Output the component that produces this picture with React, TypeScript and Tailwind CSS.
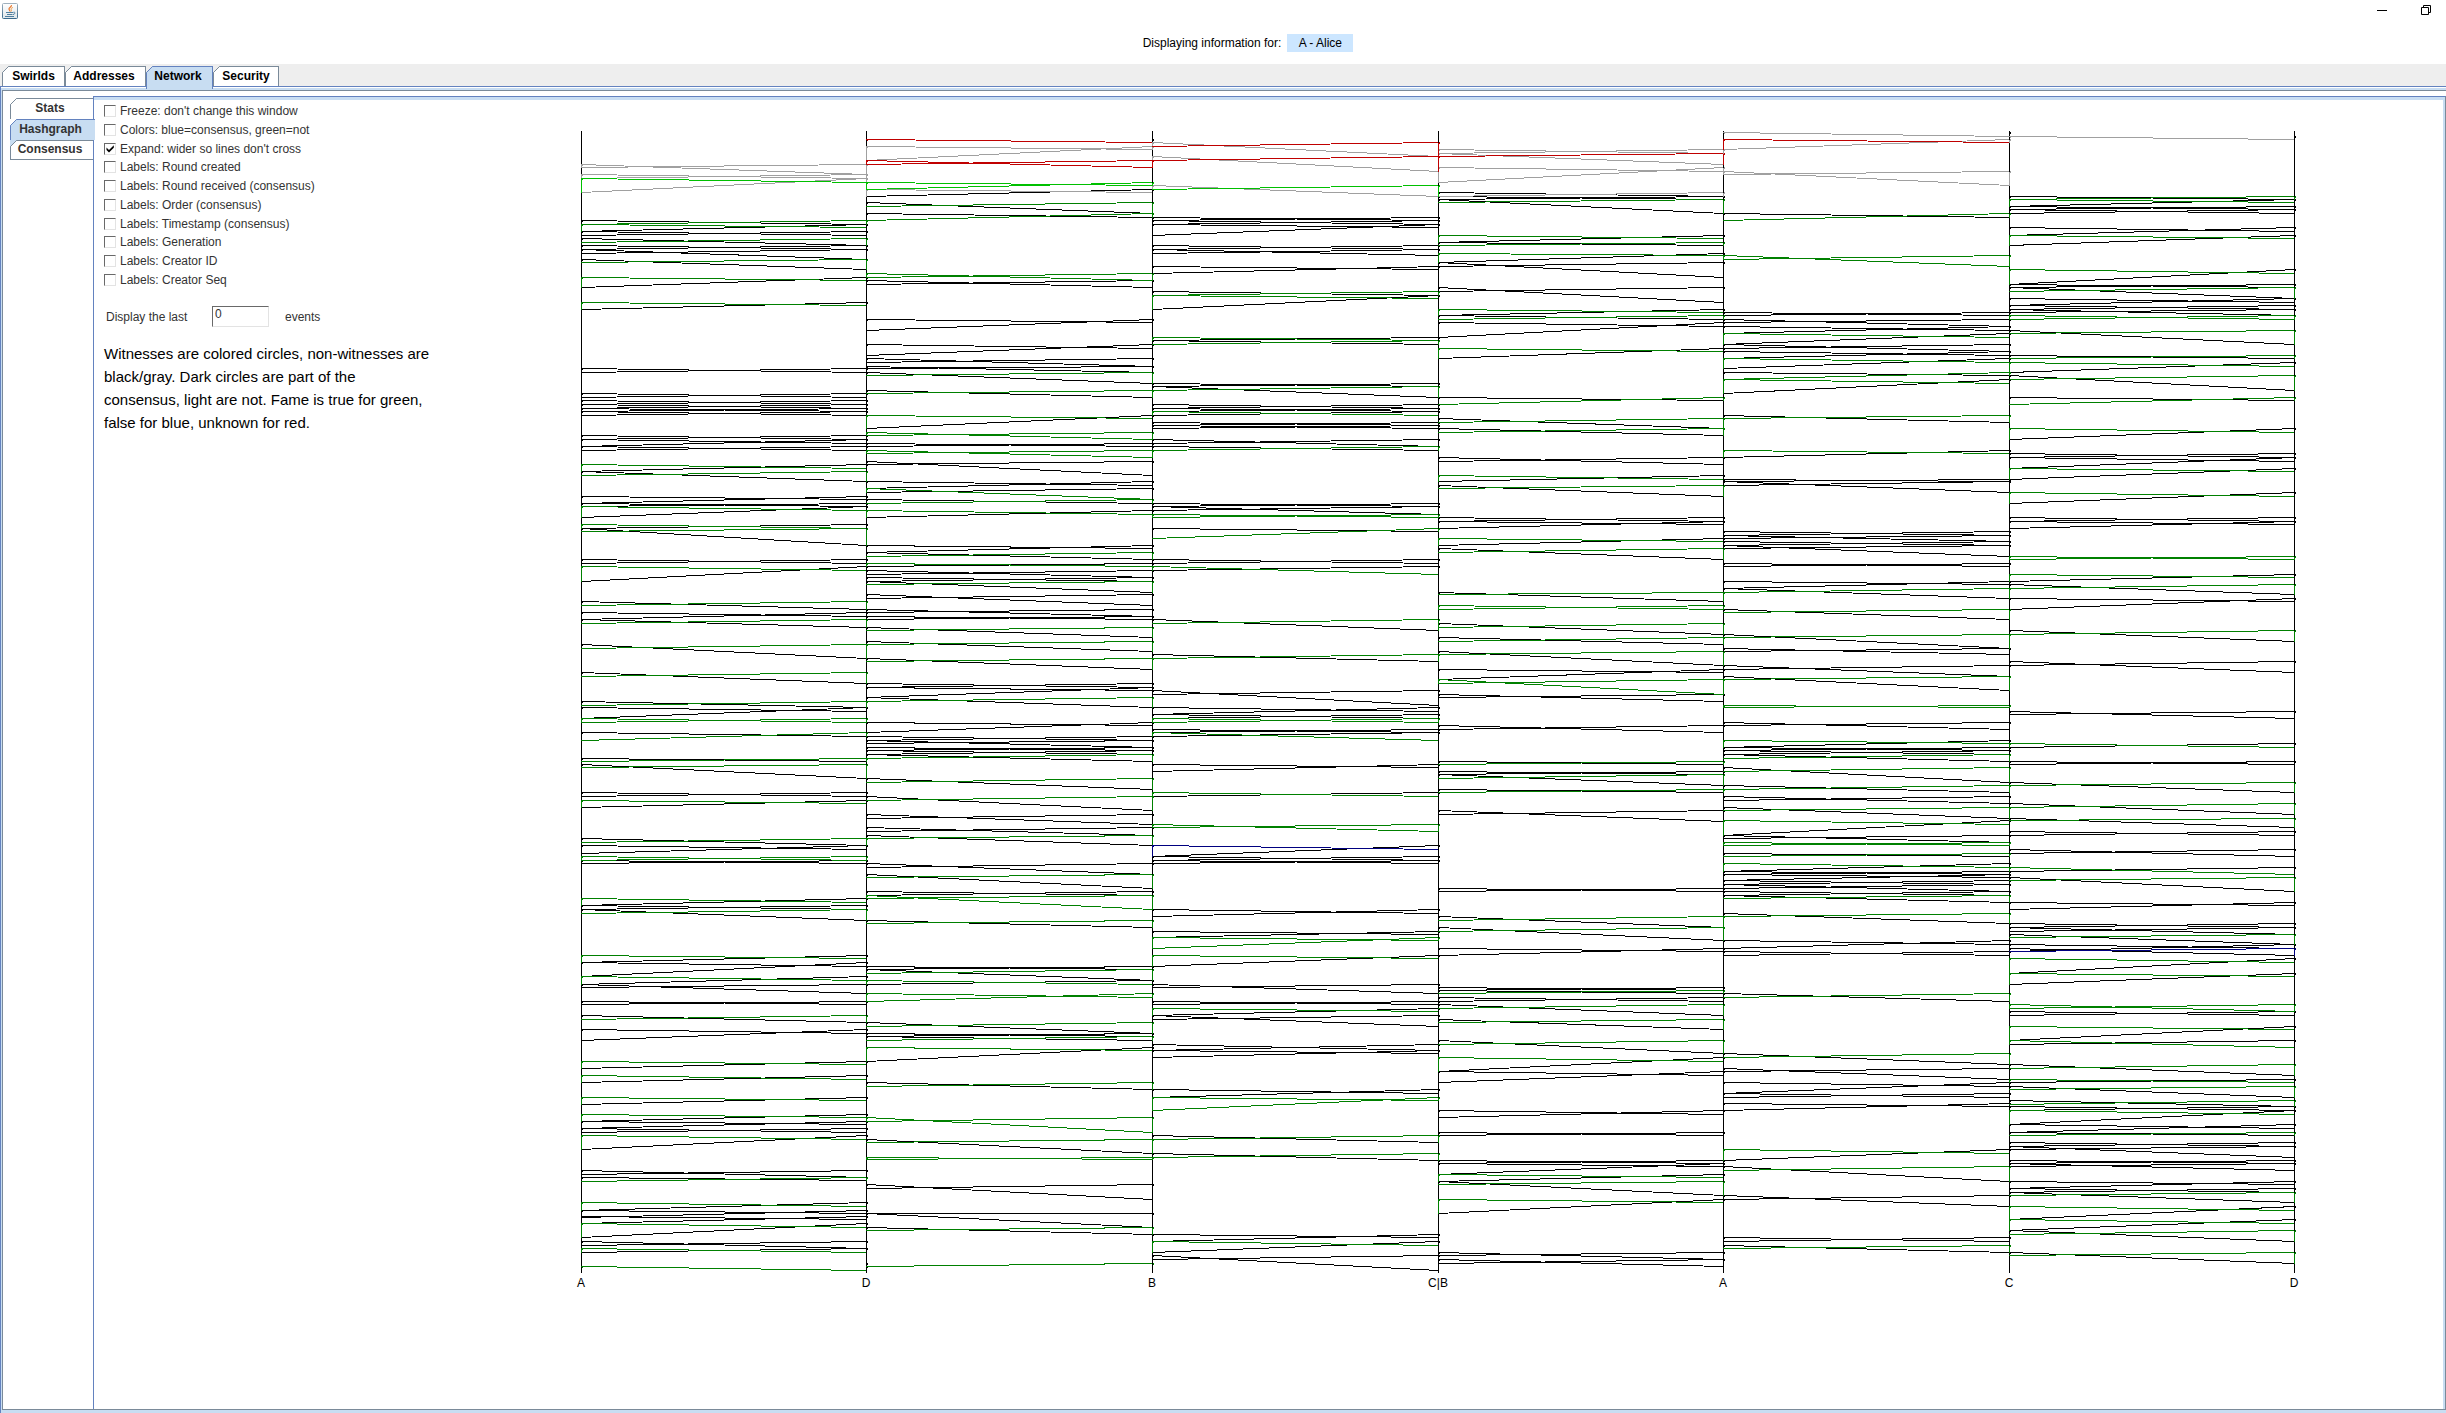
import React from "react";

type Ink = "k" | "g" | "G" | "r" | "s" | "n";

const INKS: Record<Ink, string> = {
  k: "#000000",
  s: "#a0a0a0",
  g: "#008000",
  G: "#00c000",
  r: "#c00000",
  n: "#000080",
};

const MEMBERS = [
  { name: "A", x: 581 },
  { name: "D", x: 866 },
  { name: "B", x: 1152 },
  { name: "C|B", x: 1438 },
  { name: "A", x: 1723 },
  { name: "C", x: 2009 },
  { name: "D", x: 2294 },
];

/*
 * Syncs between two neighbouring members, in thirds of a pixel below the
 * base line. Each entry: time, other-parent on the right, other-parent on the
 * left ("-" for none), and the inks of the two new events.
 */
const SYNCS: { gap: number; base: number; data: string }[] = [
  {
    gap: 0,
    base: 110,
    data: "163 193 172 ss;193 205 205 ss;205 217 247 Gs;331 343 343 kg;343 352 364 gk;364 376 376 kk;385 406 397 kg;406 418 418 kk;418 448 430 kk;448 478 457 kg;502 511 532 gk;577 586 598 gk;775 787 787 kk;850 862 862 kk;871 883 883 kk;883 895 895 kk;895 904 904 kk;904 916 916 kk;976 988 988 kk;988 1000 1009 kk;1009 1021 1021 kk;1063 1075 1084 gk;1084 1114 1096 kg;1159 1168 1180 kk;1180 1189 1189 kk;1189 1201 1222 gk",
  },
  {
    gap: 0,
    base: 500,
    data: "73 85 85 gk;85 136 94 kg;178 190 190 kk;199 211 244 gk;304 328 316 kg;337 349 358 kk;358 382 370 kg;433 475 445 kg;517 550 529 kg;604 622 616 kg;622 634 655 kk;655 667 667 gg;697 709 721 kg;775 784 784 kg;793 835 802 kg;877 889 889 kk;901 910 922 gk;1015 1036 1027 kg;1036 1048 1060 kk;1069 1081 1081 gg;1081 1090 1090 kk",
  },
  {
    gap: 0,
    base: 890,
    data: "25 37 46 gk;46 58 58 kk;58 91 70 kg;196 205 217 gk;217 229 259 kk;259 271 283 gk;283 310 292 kk;334 343 343 kk;376 397 388 kg;418 430 451 kk;514 523 535 gk;556 568 577 gk;622 631 643 gk;673 682 694 gk;694 703 715 kk;715 727 727 kk;736 748 778 gk;841 862 853 kk;862 871 874 kg;937 949 961 gk;961 970 982 kk;979 988 1000 kk;1000 1012 1042 gk;1054 1075 1066 kk;1075 1087 1087 gk;1129 1141 - gk",
  },
  {
    gap: 1,
    base: 110,
    data: "88 97 - rk;109 118 151 ss;151 172 163 rr;217 226 238 GG;238 247 259 sk;277 310 289 kg;310 322 331 kg;490 511 502 gg;511 532 523 kk;628 637 661 kk;703 715 736 kk;745 769 757 kk;769 787 775 kk;787 820 796 kg;841 862 850 kg;916 925 955 gk;967 988 976 gg;1000 1009 1009 kk;1021 1042 1030 gg;1054 1096 1063 kk;1114 1126 1135 kk;1135 1168 1147 gk;1168 1180 1180 kg",
  },
  {
    gap: 1,
    base: 500,
    data: "31 43 52 gk;136 145 157 kk;157 178 169 kg;190 199 199 gk;211 232 223 kk;232 244 244 kk;244 277 253 kg;283 316 295 kk;328 349 337 kk;349 358 358 kk;382 412 391 kg;424 454 433 kg;475 508 484 kg;550 562 562 kk;562 571 592 kk;592 622 604 kg;667 676 697 kk;709 721 721 kk;721 742 730 kk;742 751 751 kk;751 763 763 kk;763 784 775 kg;835 868 847 kg;889 931 901 kg;943 973 955 kk;982 1006 994 kk;1006 1036 1015 kg;1090 1123 1102 kk;1123 1165 1132 kg;1174 1186 1186 kk",
  },
  {
    gap: 1,
    base: 890,
    data: "16 58 25 gg;91 112 100 kg;229 238 238 kk;238 271 250 kg;271 283 283 gk;310 322 334 gg;397 430 409 kg;430 439 439 kk;439 451 451 kg;472 481 514 gk;577 598 589 kg;682 727 694 gg;748 790 757 kg;802 808 808 gg;883 928 895 kk;970 1012 970 kk;1012 1033 1021 kg;1120 - 1129 kg",
  },
  {
    gap: 2,
    base: 110,
    data: "97 139 109 sr;139 184 151 sr;226 259 238 sG;322 331 331 kk;331 343 343 kk;343 352 376 kk;406 418 418 kk;418 436 430 kk;469 478 490 kk;544 556 556 kg;556 565 598 gk;682 691 691 gk;691 703 703 kg;820 829 829 kk;829 862 841 kg;883 895 895 kk;895 904 904 kk;904 916 916 gk;937 946 946 kk;946 955 955 kk;988 1009 1000 kk;1009 1021 1021 kg;1180 1189 1189 kk;1189 1213 1201 kk",
  },
  {
    gap: 2,
    base: 500,
    data: "43 52 52 gg;85 94 115 kg;178 190 190 kk;199 223 211 gk;358 391 370 kg;463 484 475 kg;571 616 583 kk;622 634 643 kk;643 655 655 kk;655 667 667 gg;688 697 697 kk;697 721 709 gk;793 802 814 kk;877 889 889 gk;973 994 982 gg;1036 1048 1069 nk;1069 1081 1081 kk;1081 1090 1090 kk",
  },
  {
    gap: 2,
    base: 890,
    data: "58 70 79 kk;124 133 142 kk;142 151 175 gg;196 205 229 gk;283 310 292 kk;334 343 343 kk;355 364 376 gk;376 409 388 kk;463 481 481 kk;481 490 502 kk;598 610 622 kk;622 631 661 gg;736 757 748 kg;790 811 802 kg;1033 1042 1054 kk;1054 1066 1087 gk;1096 1141 1108 kk",
  },
  {
    gap: 3,
    base: 110,
    data: "118 130 130 ss;130 163 139 sr;172 184 217 ss;247 259 259 ks;259 268 268 kk;268 310 277 kg;376 385 397 gk;397 406 406 kg;430 436 457 gk;457 502 469 kk;532 577 544 kk;598 607 616 gk;616 628 628 kg;637 649 682 kk;715 724 745 gk;862 871 883 kg;925 955 937 kg;955 976 967 kg;1042 1063 1054 kk;1096 1108 1114 gk;1126 1159 1135 kg",
  },
  {
    gap: 3,
    base: 500,
    data: "52 64 64 kk;64 73 85 kk;115 124 136 gk;145 178 157 kg;277 304 283 kg;316 328 328 gg;370 403 382 kg;412 433 424 kg;454 496 463 kg;508 517 538 kk;538 583 550 gg;583 604 592 kk;676 697 688 kk;784 793 793 kg;814 823 823 kk;823 856 835 kg;868 877 877 kg;931 964 943 kk;1165 1174 1174 kk",
  },
  {
    gap: 3,
    base: 890,
    data: "79 112 91 kg;112 151 124 kg;175 184 196 kk;292 301 301 kk;301 310 310 kg;322 334 334 kk;343 376 355 kg;388 418 397 kg;451 490 463 kg;502 514 544 gk;544 556 577 kk;661 673 682 kk;727 736 736 kk;811 820 820 kk;820 829 853 kk;853 862 874 gk;874 916 883 kg;928 937 970 gk;1087 1108 1096 kk;1108 1129 1120 kk",
  },
  {
    gap: 4,
    base: 110,
    data: "67 79 - sk;88 97 118 rs;184 226 193 ss;310 322 331 kg;436 469 448 gg;607 616 616 kk;628 649 637 kk;649 661 670 kk;670 682 703 gk;703 724 715 kk;724 736 745 kk;745 757 775 gk;787 796 808 kg;808 820 850 gk;916 937 925 kg;1021 1030 1042 gk;1108 1114 1114 kk;1114 1147 1126 kk",
  },
  {
    gap: 4,
    base: 500,
    data: "94 106 106 kk;106 124 115 kk;124 136 136 kk;136 169 145 kk;190 199 199 kk;244 253 265 kk;265 295 277 kg;328 358 337 kg;403 445 412 kg;445 463 454 kk;496 529 508 kk;529 571 538 kg;616 622 622 gg;667 688 676 kk;721 730 742 gk;742 751 751 kk;751 763 763 kk;763 784 775 kg;802 847 814 kg;856 877 868 kg;889 910 901 kk;922 955 931 kg;961 973 1006 gk;1006 1027 1015 kk;1027 1036 1036 gg;1060 1069 1069 kg;1090 1102 1114 gk;1114 1123 1123 kk;1123 1132 1141 kk;1141 1153 1153 kk;1153 1174 1165 kk;1174 1186 1186 kk;1186 1207 1195 kg",
  },
  {
    gap: 4,
    base: 890,
    data: "70 100 79 kg;151 163 175 kk;184 196 196 kk;310 334 322 kg;490 523 502 kg;535 568 544 kk;577 589 610 kk;610 622 622 kk;640 649 661 kk;778 790 811 gk;828 873 840 kg;915 948 927 kk;1041 1053 1053 kk;1065 1086 1074 kg",
  },
  {
    gap: 5,
    base: 110,
    data: "79 88 - sk;259 268 268 kg;268 277 289 gk;289 298 298 kk;298 310 310 kk;352 364 376 kk;376 385 406 gk;478 490 523 gk;523 532 532 kk;532 565 544 kg;565 577 586 kk;586 598 598 kk;598 616 607 kk;616 628 628 gg;661 703 670 kg;736 745 745 kg;757 769 787 gk;796 841 808 kg;862 871 883 kg;955 967 988 gk;1030 1042 1042 kk;1042 1054 1075 kk;1075 1084 1108 gk;1147 1159 1180 gk",
  },
  {
    gap: 5,
    base: 500,
    data: "52 64 64 kk;64 73 85 kk;169 178 178 gg;223 232 244 gk;253 283 265 kg;295 304 328 kk;391 424 403 kg;484 517 496 kk;634 655 643 kk;730 742 742 gk;784 793 793 kk;847 877 856 kg;910 943 922 kg;955 982 961 kg;994 1006 1006 kk;1048 1069 1060 kk;1102 1123 1114 gk;1132 1174 1141 kg",
  },
  {
    gap: 5,
    base: 890,
    data: "37 46 58 kk;100 112 112 kk;112 133 124 kk;133 163 142 kg;163 175 184 kk;175 196 184 kn;205 217 250 gk;250 259 283 gk;343 364 355 gg;364 376 376 kk;409 418 451 gk;451 472 463 gk;523 556 535 kg;568 577 577 gk;589 622 598 kg;631 649 643 kg;649 661 661 kk;661 673 703 gk;703 715 727 kk;727 736 736 kg;757 769 769 kk;769 802 778 kk;810 819 819 kk;819 840 828 kk;873 882 894 kk;894 906 906 kk;906 936 915 kg;948 960 987 gk;987 999 1020 gk;1020 1053 1032 kg;1086 1119 1095 kg",
  },
];

function buildPaths() {
  const paths: Record<Ink, string> = { k: "", s: "", g: "", G: "", r: "", n: "" };
  for (const { gap, base, data } of SYNCS) {
    const xl = MEMBERS[gap].x + 0.5;
    const xr = MEMBERS[gap + 1].x + 0.5;
    for (const entry of data.split(";")) {
      const [t, r, l, inks] = entry.split(" ");
      const y = (v: string) => base + Math.floor(Number(v) / 3) + 0.5;
      const [left, right] = inks.split("") as Ink[];
      if (r !== "-") {
        paths[left] += `M${xl} ${y(t)}L${xr} ${y(r)}`;
        if (l !== "-") paths[left] += `M${xl} ${y(t)}V${y(l)}`;
      }
      if (l !== "-") {
        paths[right] += `M${xr} ${y(t)}L${xl} ${y(l)}`;
        if (r !== "-") paths[right] += `M${xr} ${y(t)}V${y(r)}`;
      }
      paths[left] += `M${xl + 1} ${y(t) - 0.5}v2`;
      paths[right] += `M${xr + 1} ${y(t) - 0.5}v2`;
    }
  }
  return paths;
}

const PATHS = buildPaths();

function Hashgraph() {
  return (
    <svg viewBox="560 100 1883 1200" className="block h-auto w-full" role="img" aria-label="Hashgraph">
      <g fill="none" strokeWidth="1" shapeRendering="crispEdges">
        {MEMBERS.map((m) => (
          <path key={m.x} d={`M${m.x + 0.5} 131V1273`} stroke="#000000" />
        ))}
        {(Object.keys(INKS) as Ink[]).map((ink) => (
          <path key={ink} d={PATHS[ink]} stroke={INKS[ink]} />
        ))}
      </g>
      <g fontFamily="Liberation Sans, Arial, sans-serif" fontSize="12" textAnchor="middle" fill="#000000">
        {MEMBERS.map((m) => (
          <text key={m.x} x={m.x} y="1287">
            {m.name}
          </text>
        ))}
      </g>
    </svg>
  );
}

function Chamfer({ line, back }: { line: string; back: string }) {
  return (
    <svg width="7" height="7" viewBox="0 0 7 7" className="absolute -left-px -top-px" aria-hidden="true">
      <path d="M0 0H7L0 7Z" fill={back} />
      <path d="M0.5 7V6.5L6.5 0.5H7" fill="none" stroke={line} />
    </svg>
  );
}

function JavaIcon() {
  return (
    <svg width="16" height="16" viewBox="0 0 16 16" aria-hidden="true">
      <defs>
        <linearGradient id="frame" x1="0" y1="0" x2="0" y2="1">
          <stop offset="0" stopColor="#9fb0bd" />
          <stop offset="1" stopColor="#3a6a8c" />
        </linearGradient>
        <linearGradient id="face" x1="0" y1="0" x2="0" y2="1">
          <stop offset="0" stopColor="#ffffff" />
          <stop offset="1" stopColor="#dfe6ea" />
        </linearGradient>
      </defs>
      <rect x="0.5" y="0.5" width="15" height="15" rx="1" fill="url(#face)" stroke="url(#frame)" />
      <path d="M9.5 2.2C10 4 6.5 4.5 7 6.2C7.2 7 8 7.4 8 8.5" fill="none" stroke="#e8762c" strokeWidth="1.2" />
      <path d="M10.8 4.5C9 5.2 8.6 6 9.3 6.8C9.7 7.4 9.3 8 8.9 8.6" fill="none" stroke="#f0963c" />
      <path d="M4 9.5H11M5 11.5H10.5M3 13.5H12" fill="none" stroke="#4f7f9f" strokeWidth="1.2" />
      <path d="M11.3 9.3C13.5 8.6 13.6 11 11 11.6" fill="none" stroke="#4f7f9f" />
    </svg>
  );
}

const TABS = [
  { name: "Swirlds", box: "w-[63px]" },
  { name: "Addresses", box: "w-[81px] pr-[3px]" },
  { name: "Network", box: "w-[67px] pr-[3px]" },
  { name: "Security", box: "w-[66px]" },
];

const OPTIONS = [
  "Freeze: don't change this window",
  "Colors: blue=consensus, green=not",
  "Expand: wider so lines don't cross",
  "Labels: Round created",
  "Labels: Round received (consensus)",
  "Labels: Order (consensus)",
  "Labels: Timestamp (consensus)",
  "Labels: Generation",
  "Labels: Creator ID",
  "Labels: Creator Seq",
];

function Option({ text, checked }: { text: string; checked: boolean }) {
  return (
    <label className="flex items-center gap-1">
      <span className="grid">
        <input
          type="checkbox"
          defaultChecked={checked}
          className="peer size-3 appearance-none border border-b-[#e3e3e3] border-l-[#696969] border-r-[#e3e3e3] border-t-[#696969] bg-white [grid-area:1/1]"
        />
        <svg
          viewBox="0 0 12 12"
          className="invisible size-3 peer-checked:visible [grid-area:1/1]"
          aria-hidden="true"
        >
          <path d="M2.5 4.5V7L5 9.5L9.8 4.8V2.3L5 7Z" fill="#000000" />
        </svg>
      </span>
      {text}
    </label>
  );
}

export default function App() {
  return (
    <div className="flex min-h-screen flex-col bg-white font-['Liberation_Sans',Arial,sans-serif] text-[12px] leading-4 text-black">
      <header>
        <div className="flex h-[34px] items-start justify-between pl-[2px] pr-[15px] pt-[3px]">
          <JavaIcon />
          <div className="flex gap-[34px] pt-[2px]">
            <button aria-label="Minimize">
              <svg width="10" height="10" viewBox="0 0 10 10">
                <path d="M0 5.5H10" stroke="#000000" />
              </svg>
            </button>
            <button aria-label="Restore">
              <svg width="10" height="10" viewBox="0 0 10 10" fill="none" stroke="#000000">
                <path d="M0.5 2.5H7.5V9.5H0.5ZM2.5 2.5V0.5H9.5V7.5H7.5" />
              </svg>
            </button>
          </div>
        </div>
        <div className="flex h-[30px] items-start justify-center gap-[6px] pl-[50px]">
          <span className="leading-[18px]">Displaying information for:</span>
          <span className="w-[66px] bg-[#cce6ff] text-center leading-[18px]">A - Alice</span>
        </div>
      </header>

      <nav className="flex h-[22px] items-end bg-[#eeeeee] pl-[2px] pt-[2px]">
        {TABS.map((tab) => {
          const active = tab.name === "Network";
          return (
            <button
              key={tab.name}
              className={`relative ${tab.box} border-r border-t border-l font-bold ${
                active
                  ? "z-10 -mb-[3px] h-[23px] border-[#6382bf] bg-[#c8ddf2] pb-[5px]"
                  : "h-5 border-[#7a8a99] bg-white pb-[2px]"
              }`}
            >
              <Chamfer line={active ? "#6382bf" : "#7a8a99"} back="#eeeeee" />
              {tab.name}
            </button>
          );
        })}
      </nav>

      <div className="flex flex-1 flex-col border-l border-t border-[#6382bf] bg-white pt-px">
        <div className="flex flex-1 flex-col bg-[#c8ddf2] pb-[3px] pl-px pt-[2px]">
          <main className="flex flex-1 border-b border-l border-t border-[#7a8a99] bg-white pt-[5px]">
            <nav className="flex w-[90px] flex-none flex-col pl-[7px] pt-[2px] text-[#333333]">
              <button className="relative h-[21px] border-l border-t border-[#7a8a99] bg-white pb-[2px] pr-[4px] font-bold">
                <Chamfer line="#7a8a99" back="#ffffff" />
                Stats
              </button>
              <button className="relative z-10 -mr-[2px] h-[21px] border-l border-t border-[#6382bf] bg-[#c8ddf2] pb-[2px] pr-[5px] font-bold">
                <Chamfer line="#6382bf" back="#ffffff" />
                Hashgraph
              </button>
              <button className="relative h-5 border-b border-l border-t border-[#7a8a99] bg-white pb-[2px] pr-[4px] font-bold">
                <Chamfer line="#7a8a99" back="#c8ddf2" />
                Consensus
              </button>
            </nav>

            <section className="flex flex-1 items-start border-l border-r border-t border-l-[#6382bf] border-r-[#7a8a99] border-t-[#6382bf]">
              <div className="flex flex-1 items-start self-stretch border-r-2 border-t-[3px] border-[#c8ddf2]">
                <form className="w-[466px] flex-none pl-[10px] pt-[2px] text-[#333333]">
                  <div className="grid h-[187px] auto-rows-fr justify-items-start">
                    {OPTIONS.map((text, i) => (
                      <Option key={text} text={text} checked={i === 2} />
                    ))}
                  </div>
                  <div className="mt-[17px] flex h-[21px] items-center pl-[2px]">
                    <label htmlFor="count" className="w-[106px]">
                      Display the last
                    </label>
                    <input
                      id="count"
                      defaultValue="0"
                      className="h-[21px] w-[57px] border border-b-[#e3e3e3] border-l-[#696969] border-r-[#e3e3e3] border-t-[#696969] bg-white pb-[5px] pl-[2px]"
                    />
                    <span className="pl-4">events</span>
                  </div>
                  <p className="mt-[15px] w-[350px] text-[15px] leading-[23px] text-black">
                    Witnesses are colored circles, non-witnesses are
                    <br />
                    black/gray. Dark circles are part of the
                    <br />
                    consensus, light are not. Fame is true for green,
                    <br />
                    false for blue, unknown for red.
                  </p>
                </form>
                <div className="min-w-0 flex-1">
                  <Hashgraph />
                </div>
              </div>
            </section>
          </main>
        </div>
      </div>
    </div>
  );
}
